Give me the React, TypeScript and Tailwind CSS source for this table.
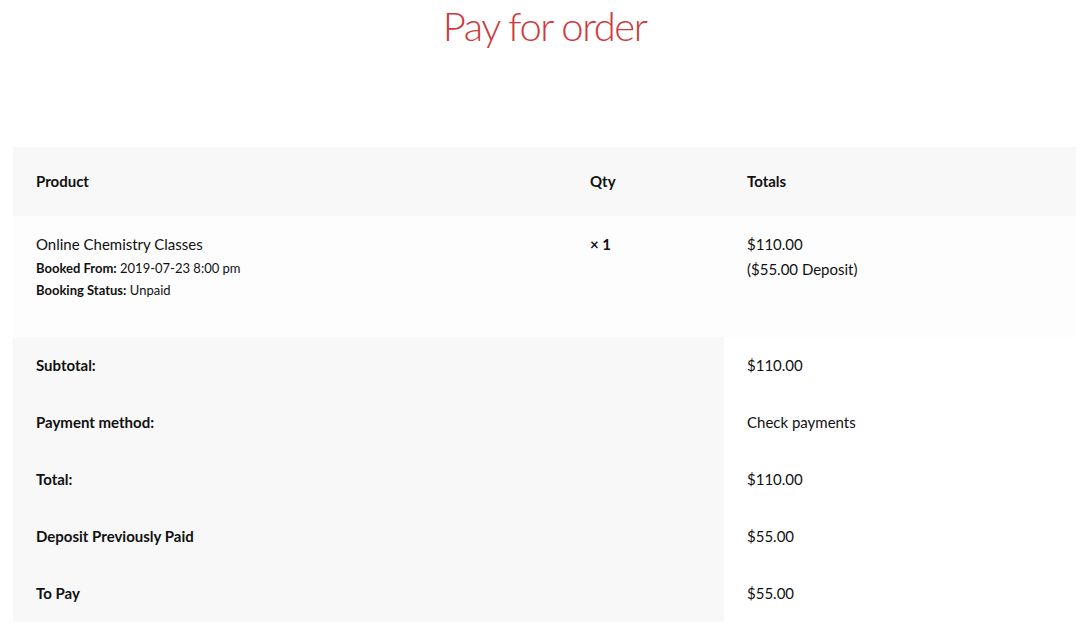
const rows = [
  { label: "Subtotal:", value: "$110.00" },
  { label: "Payment method:", value: "Check payments" },
  { label: "Total:", value: "$110.00" },
  { label: "Deposit Previously Paid", value: "$55.00" },
  { label: "To Pay", value: "$55.00" },
];

export default function App() {
  return (
    <div className="min-h-screen bg-white text-[#111] font-['Lato',sans-serif]">
      <h1 className="text-center text-[40px] font-light leading-[52px] tracking-[-1.5px] text-[#d0393b]">
        Pay for order
      </h1>

      <div className="px-[13px] pt-[95px]">
        <table className="w-full border-collapse text-[15px]">
          <colgroup>
            <col className="w-[554px]" />
            <col className="w-[157px]" />
            <col />
          </colgroup>
          <thead>
            <tr className="h-[69px] bg-[#f8f8f8] text-left font-bold">
              <th className="px-[23px]">Product</th>
              <th className="px-[23px]">Qty</th>
              <th className="px-[23px]">Totals</th>
            </tr>
          </thead>
          <tbody>
            <tr className="h-[121px] bg-[#fdfdfd] align-top">
              <td className="px-[23px] pt-[18px]">
                <div className="leading-[20px]">Online Chemistry Classes</div>
                <div className="mt-[3px] text-[13px] leading-[22px]">
                  <b>Booked From:</b> 2019-07-23 8:00 pm
                </div>
                <div className="text-[13px] leading-[22px]">
                  <b>Booking Status:</b> Unpaid
                </div>
              </td>
              <td className="px-[23px] pt-[18px] font-bold leading-[20px]">× 1</td>
              <td className="px-[23px] pt-[19px] leading-[25px]">
                <div className="-mt-[3px]">$110.00</div>
                <div>($55.00 Deposit)</div>
              </td>
            </tr>
          </tbody>
          <tfoot>
            {rows.map((r) => (
              <tr key={r.label} className="h-[57px]">
                <th colSpan={2} className="bg-[#f8f8f8] px-[23px] text-left font-bold">
                  {r.label}
                </th>
                <td className="px-[23px]">{r.value}</td>
              </tr>
            ))}
          </tfoot>
        </table>
      </div>
    </div>
  );
}
